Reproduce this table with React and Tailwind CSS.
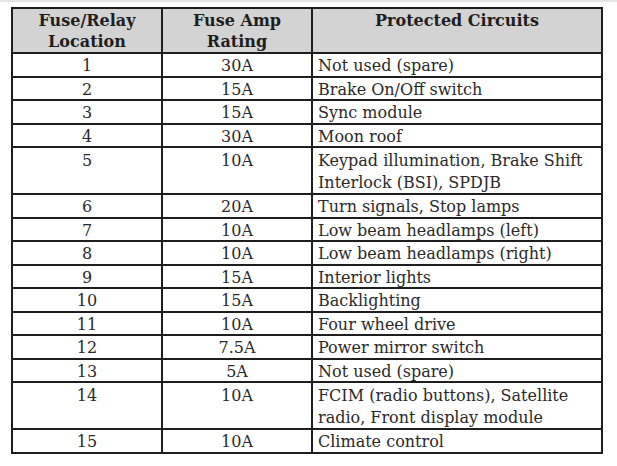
import React from "react";

const rows = [
    ["1", "30A", ["Not used (spare)"]],
    ["2", "15A", ["Brake On/Off switch"]],
    ["3", "15A", ["Sync module"]],
    ["4", "30A", ["Moon roof"]],
    ["5", "10A", ["Keypad illumination, Brake Shift", "Interlock (BSI), SPDJB"]],
    ["6", "20A", ["Turn signals, Stop lamps"]],
    ["7", "10A", ["Low beam headlamps (left)"]],
    ["8", "10A", ["Low beam headlamps (right)"]],
    ["9", "15A", ["Interior lights"]],
    ["10", "15A", ["Backlighting"]],
    ["11", "10A", ["Four wheel drive"]],
    ["12", "7.5A", ["Power mirror switch"]],
    ["13", "5A", ["Not used (spare)"]],
    ["14", "10A", ["FCIM (radio buttons), Satellite", "radio, Front display module"]],
    ["15", "10A", ["Climate control"]],
];

export default function App() {
    return (
        <div className="w-[617px] h-[466px] bg-white text-[#2a2a2a] font-['DejaVu_Serif',serif]">
            <div className="h-[2px] bg-[#e4e4e4]" />
            <div className="ml-[11px] mt-[5px] w-[592px] border-2 border-[#1e1e1e]">
                {/* header */}
                <div className="grid grid-cols-[148px_150px_1fr] bg-[#d3d3d3] text-[16px] font-bold leading-[20.5px] text-[#1e1e1e] h-[43px] pt-[2px]">
                    <div className="text-center">
                        Fuse/Relay
                        <br />
                        Location
                    </div>
                    <div className="border-l-2 border-[#1e1e1e] -mt-[2px] pt-[2px] text-center">
                        Fuse Amp
                        <br />
                        Rating
                    </div>
                    <div className="border-l-2 border-[#1e1e1e] -mt-[2px] pt-[2px] text-center">Protected Circuits</div>
                </div>
                {rows.map(([loc, amp, lines]) => (
                    <div
                        key={loc}
                        className={`grid grid-cols-[148px_150px_1fr] border-t-2 border-[#1e1e1e] text-[16px] ${
                            lines.length > 1 ? "leading-[21.5px]" : "leading-[19.5px]"
                        }`}
                    >
                        <div className="pt-[2px] text-center">{loc}</div>
                        <div className="border-l-2 border-[#1e1e1e] pt-[2px] text-center">{amp}</div>
                        <div className="border-l-2 border-[#1e1e1e] pt-[2px] pl-[5px]">
                            {lines.map((l) => (
                                <div key={l}>{l}</div>
                            ))}
                        </div>
                    </div>
                ))}
            </div>
        </div>
    );
}
